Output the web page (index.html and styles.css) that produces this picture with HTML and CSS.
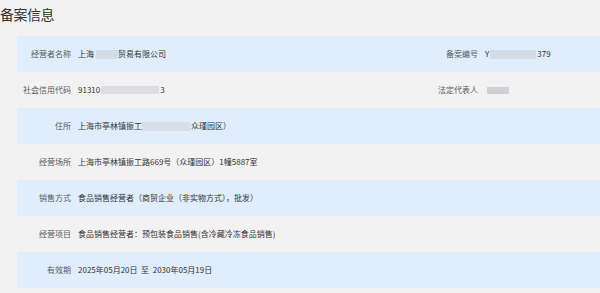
FILE: index.html
```html
<!DOCTYPE html>
<html lang="zh-CN">
<head>
<meta charset="utf-8">
<link rel="stylesheet" href="styles.css">
</head>
<body>
<div class="page">
  <h1 class="title">备案信息</h1>
  <div class="table">
    <div class="row blue">
      <div class="label">经营者名称</div>
      <div class="value">上海<span class="mask m1"></span>贸易有限公司</div>
      <div class="label">备案编号</div>
      <div class="value">Y<span class="mask m2"></span>379</div>
    </div>
    <div class="row">
      <div class="label">社会信用代码</div>
      <div class="value">91310<span class="mask m3"></span>3</div>
      <div class="label">法定代表人</div>
      <div class="value"><span class="mask m4"></span></div>
    </div>
    <div class="row blue">
      <div class="label">住所</div>
      <div class="value">上海市亭林镇振工<span class="mask m5"></span>众瑾园区）</div>
    </div>
    <div class="row">
      <div class="label">经营场所</div>
      <div class="value">上海市亭林镇振工路669号（众瑾园区）1幢5887室</div>
    </div>
    <div class="row blue">
      <div class="label">销售方式</div>
      <div class="value">食品销售经营者（商贸企业（非实物方式），批发）</div>
    </div>
    <div class="row">
      <div class="label">经营项目</div>
      <div class="value">食品销售经营者：预包装食品销售(含冷藏冷冻食品销售)</div>
    </div>
    <div class="row blue">
      <div class="label">有效期</div>
      <div class="value">2025年05月20日&nbsp;&nbsp;至&nbsp;&nbsp;2030年05月19日</div>
    </div>
  </div>
</div>
</body>
</html>
```

FILE: styles.css
```css
html, body {
  margin: 0;
  padding: 0;
  background: #f2f2f2;
}
.page {
  width: 600px;
  height: 293px;
  overflow: hidden;
  font-family: "Noto Sans CJK SC", "Noto Sans", sans-serif;
}
.title {
  margin: 0;
  padding: 4px 0 0 0;
  height: 32px;
  font-size: 14px;
  line-height: 20px;
  font-weight: normal;
  color: #333;
  letter-spacing: -0.5px;
}
.table {
  margin-left: 17px;
  display: flex;
  flex-direction: column;
}
.row {
  display: grid;
  grid-template-columns: 54px 339px 54px 1fr;
  column-gap: 7px;
  align-items: center;
  height: 36px;
  font-size: 8px;
  line-height: 10px;
}
.row.blue {
  background: #dfedfd;
}
.label {
  text-align: right;
  color: #5a5a5a;
  white-space: nowrap;
}
.value {
  color: #333;
  white-space: nowrap;
  display: flex;
  align-items: center;
}
.mask {
  display: inline-block;
  height: 9px;
  background: #d3dce6;
  filter: blur(0.6px);
}
.m1 { width: 22px; margin-left: 2px; }
.m2 { width: 46px; margin: 0 1px; }
.m3 { width: 58px; height: 8px; background: #dcdee1; margin: 0 1px; }
.m4 { width: 22px; height: 7px; background: #cfd1d4; margin-left: 2px; }
.m5 { width: 48px; background: #d6dee7; margin-right: 1px; }
```
